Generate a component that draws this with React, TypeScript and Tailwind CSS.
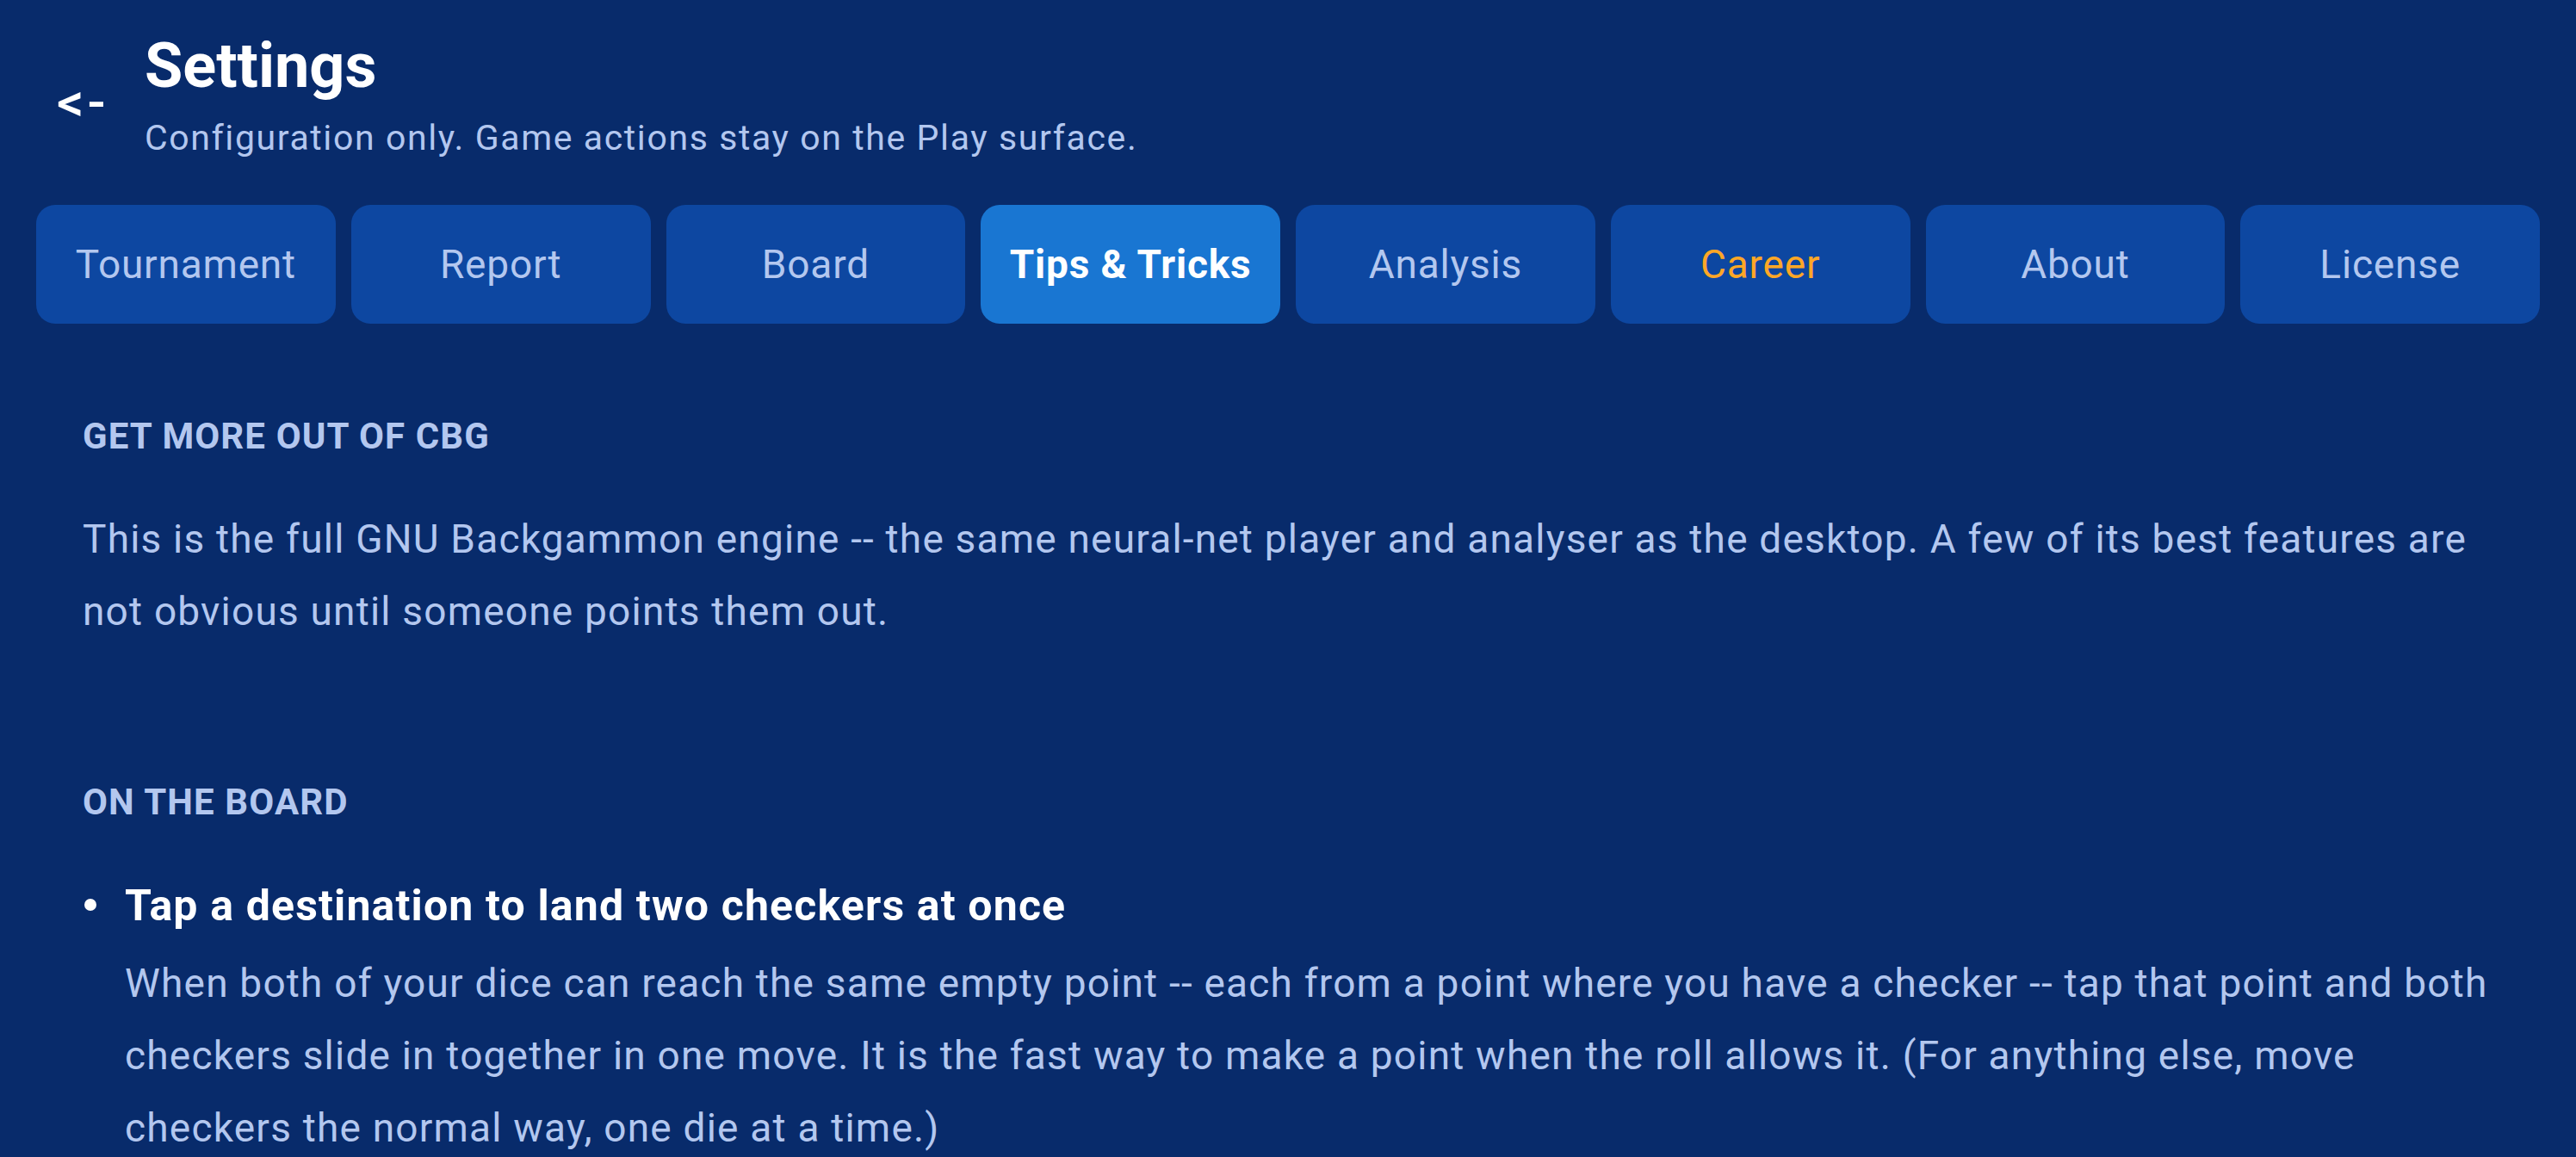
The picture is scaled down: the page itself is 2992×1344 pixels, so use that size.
const TABS = [
  "Tournament",
  "Report",
  "Board",
  "Tips & Tricks",
  "Analysis",
  "Career",
  "About",
  "License",
];

const ACTIVE = "Tips & Tricks";

const Tab = ({ label }: { label: string }) => {
  const active = label === ACTIVE;
  const career = label === "Career";
  return (
    <button
      className={
        "flex h-[138px] flex-1 items-center justify-center rounded-[22px] text-[46px] tracking-[0.8px] " +
        (active
          ? "bg-[#1976d2] font-bold text-white"
          : career
            ? "bg-[#0d47a1] text-[#ffa726]"
            : "bg-[#0d47a1] text-[#b3c7ef]")
      }
    >
      {label}
    </button>
  );
};

const SectionTitle = ({ children }: { children: string }) => (
  <h2 className="text-[42px] font-bold leading-[50px] tracking-[1.1px] text-[#b3c7ef]">
    {children}
  </h2>
);

export default function App() {
  return (
    <div className="min-h-screen bg-[#082b6b] font-['Roboto',sans-serif]">
      <header className="flex pt-[35px] pl-[66px]">
        <button className="mt-[54px] w-[102px] self-start text-left text-[62px] font-medium leading-[60px] tracking-[4px] text-white">
          &lt;-
        </button>
        <div>
          <h1 className="text-[72px] font-bold leading-[84px] text-white">Settings</h1>
          <p className="mt-[13px] text-[41px] leading-[56px] tracking-[1.6px] text-[#b3c7ef]">
            Configuration only. Game actions stay on the Play surface.
          </p>
        </div>
      </header>

      <nav className="mt-[50px] flex gap-[18px] px-[42px]">
        {TABS.map((t) => (
          <Tab key={t} label={t} />
        ))}
      </nav>

      <main className="px-[96px] pt-[106px]">
        <section>
          <SectionTitle>GET MORE OUT OF CBG</SectionTitle>
          <p className="mt-[52px] text-[46px] leading-[84px] tracking-[1.2px] text-[#b3c7ef]">
            This is the full GNU Backgammon engine -- the same neural-net player and analyser as
            the desktop. A few of its best features are not obvious until someone points them
            out.
          </p>
        </section>

        <section className="mt-[155px]">
          <SectionTitle>ON THE BOARD</SectionTitle>
          <ul className="mt-[65px]">
            <li className="flex items-start">
              <span className="ml-[2px] mt-[22px] mr-[33px] h-[14px] w-[14px] shrink-0 rounded-full bg-white" />
              <div>
                <h3 className="text-[50px] font-bold leading-[60px] tracking-[1.15px] text-white">
                  Tap a destination to land two checkers at once
                </h3>
                <p className="mt-[18px] text-[46px] leading-[84px] tracking-[1.2px] text-[#b3c7ef]">
                  When both of your dice can reach the same empty point -- each from a point where
                  you have a checker -- tap that point and both checkers slide in together in one
                  move. It is the fast way to make a point when the roll allows it. (For anything
                  else, move checkers the normal way, one die at a time.)
                </p>
              </div>
            </li>
          </ul>
        </section>
      </main>
    </div>
  );
}
